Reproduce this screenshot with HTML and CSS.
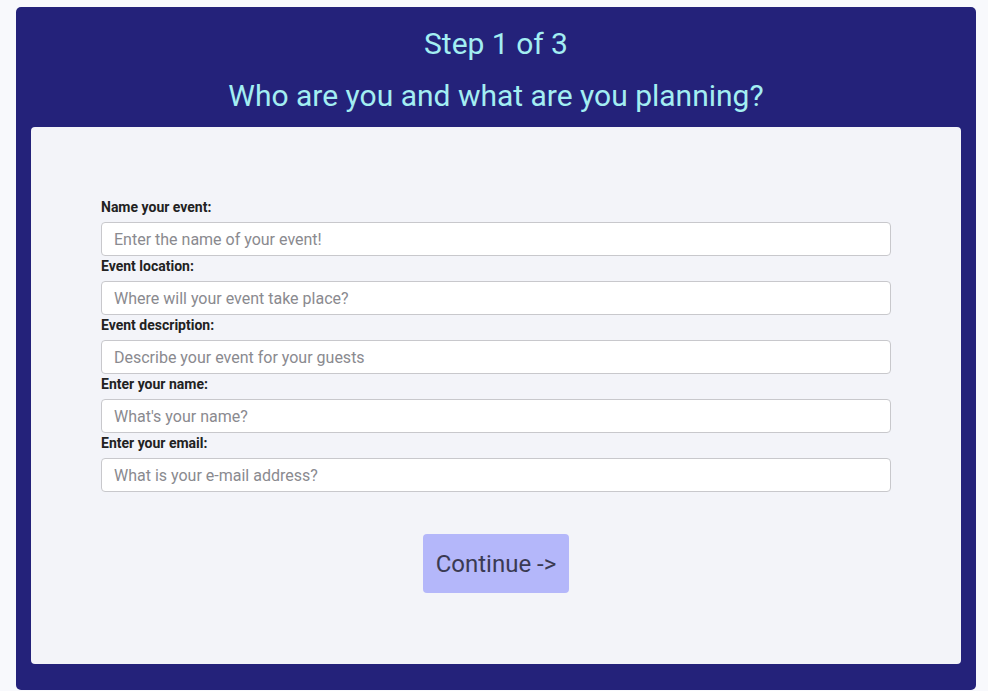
FILE: index.html
```html
<!DOCTYPE html>
<html lang="en">
<head>
<meta charset="utf-8">
<title>Step 1 of 3</title>
<link rel="stylesheet" href="styles.css">
</head>
<body>
<main class="card">
  <h1 class="step">Step 1 of 3</h1>
  <h2 class="question">Who are you and what are you planning?</h2>
  <section class="panel">
    <form class="form">
      <label class="label" for="name">Name your event:</label>
      <input class="input" id="name" type="text" placeholder="Enter the name of your event!">
      <label class="label" for="loc">Event location:</label>
      <input class="input" id="loc" type="text" placeholder="Where will your event take place?">
      <label class="label" for="desc">Event description:</label>
      <input class="input" id="desc" type="text" placeholder="Describe your event for your guests">
      <label class="label" for="you">Enter your name:</label>
      <input class="input" id="you" type="text" placeholder="What's your name?">
      <label class="label" for="mail">Enter your email:</label>
      <input class="input" id="mail" type="text" placeholder="What is your e-mail address?">
      <div class="actions">
        <button class="btn" type="button">Continue -&gt;</button>
      </div>
    </form>
  </section>
</main>
</body>
</html>
```
FILE: styles.css
```css
* { box-sizing: border-box; }
html, body { margin: 0; padding: 0; }
body {
  background: #f8f9fc;
  font-family: Roboto, "Liberation Sans", sans-serif;
  padding: 7px 12px 0 16px;
}
.card {
  width: 960px;
  height: 683px;
  background: #24227a;
  border-radius: 5px;
  padding: 0 15px 26px;
  display: flex;
  flex-direction: column;
}
.step, .question {
  margin: 0;
  text-align: center;
  color: #a3eef2;
  font-weight: 400;
  font-size: 30px;
  line-height: 34px;
}
.step { margin-top: 20px; }
.question { margin-top: 18px; margin-bottom: 14px; }
.panel {
  flex: 1;
  background: #f3f4f9;
  border-radius: 4px;
  padding: 73px 70px 0;
}
.form {
  display: flex;
  flex-direction: column;
}
.label {
  font-size: 14px;
  font-weight: 700;
  color: #222;
  line-height: 15px;
  margin-bottom: 7px;
}
.input {
  height: 34px;
  border: 1px solid #c8c8cc;
  border-radius: 4px;
  background: #fff;
  padding: 0 12px;
  font-family: inherit;
  font-size: 16px;
  color: #333;
  margin-bottom: 3px;
}
.input::placeholder { color: #8a8a8f; }
.actions {
  display: flex;
  justify-content: center;
  margin-top: 39px;
}
.btn {
  width: 146px;
  height: 59px;
  background: #b4b7fa;
  border: none;
  border-radius: 4px;
  font-family: inherit;
  font-size: 24px;
  color: #3a3a52;
  padding: 0;
}
```
